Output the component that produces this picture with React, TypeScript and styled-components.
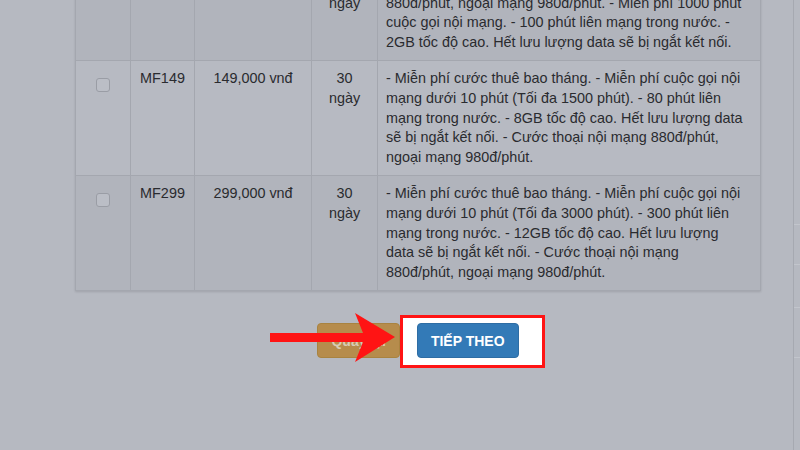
import styled, { createGlobalStyle } from 'styled-components';

const GlobalStyle = createGlobalStyle`
  html, body {
    margin: 0;
    padding: 0;
    background: #b6b9c1;
    font-family: "Liberation Sans", Arial, sans-serif;
    overflow: hidden;
  }
`;

type Plan = {
  code: string;
  price: string;
  days: string;
  desc: string;
};

const plans: Plan[] = [
  {
    code: 'MF99',
    price: '99,000 vnđ',
    days: '30 ngày',
    desc: '- Miễn phí cước thuê bao tháng. - Cước thoại nội mạng 880đ/phút, ngoại mạng 980đ/phút. - Miễn phí 1000 phút cuộc gọi nội mạng. - 100 phút liên mạng trong nước. - 2GB tốc độ cao. Hết lưu lượng data sẽ bị ngắt kết nối.',
  },
  {
    code: 'MF149',
    price: '149,000 vnđ',
    days: '30 ngày',
    desc: '- Miễn phí cước thuê bao tháng. - Miễn phí cuộc gọi nội mạng dưới 10 phút (Tối đa 1500 phút). - 80 phút liên mạng trong nước. - 8GB tốc độ cao. Hết lưu lượng data sẽ bị ngắt kết nối. - Cước thoại nội mạng 880đ/phút, ngoại mạng 980đ/phút.',
  },
  {
    code: 'MF299',
    price: '299,000 vnđ',
    days: '30 ngày',
    desc: '- Miễn phí cước thuê bao tháng. - Miễn phí cuộc gọi nội mạng dưới 10 phút (Tối đa 3000 phút). - 300 phút liên mạng trong nước. - 12GB tốc độ cao. Hết lưu lượng data sẽ bị ngắt kết nối. - Cước thoại nội mạng 880đ/phút, ngoại mạng 980đ/phút.',
  },
];

export default function App() {
  return (
    <Page>
      <GlobalStyle />
      <Main>
        <Table>
          <colgroup>
            <col style={{ width: 55 }} />
            <col style={{ width: 64 }} />
            <col style={{ width: 117 }} />
            <col style={{ width: 66 }} />
            <col />
          </colgroup>
          <tbody>
            {plans.map((p, i) => (
              <Row key={p.code} $striped={i % 2 === 0}>
                <Cell $align="center">
                  <Checkbox />
                </Cell>
                <Cell $align="center">{p.code}</Cell>
                <Cell $align="center">{p.price}</Cell>
                <Cell $align="center">{p.days}</Cell>
                <Cell $align="left">{p.desc}</Cell>
              </Row>
            ))}
          </tbody>
        </Table>

        <Actions>
          <Button $variant="back">Quay lại</Button>
          <Highlight>
            <Button $variant="next">TIẾP THEO</Button>
          </Highlight>
        </Actions>
      </Main>
      <SideStrip />

      <Arrow width="130" height="54" viewBox="0 0 130 54">
        <path d="M0 20 L93 20 L85 0 L125 24 L85 49 L93 29 L0 29 Z" fill="#ff1414" />
      </Arrow>
    </Page>
  );
}

const Page = styled.div`
  position: relative;
  display: flex;
  height: 450px;
  overflow: hidden;
`;

const Main = styled.div`
  flex: 1;
  padding-left: 75px;
`;

const SideStrip = styled.div`
  width: 6px;
  border-left: 1px solid #a6a9b1;
  background: linear-gradient(
    to bottom,
    transparent 224px, #c2c5cc 224px, #c2c5cc 225px,
    transparent 225px, transparent 264px, #c2c5cc 264px, #c2c5cc 265px,
    transparent 265px, transparent 307px, #c2c5cc 307px, #c2c5cc 308px,
    transparent 308px, transparent 357px, #c2c5cc 357px, #c2c5cc 358px,
    transparent 358px
  );
`;

const Table = styled.table`
  margin-top: -35px;
  width: 686px;
  border-collapse: collapse;
  table-layout: fixed;
  border: 1px solid #a4a7af;
  box-shadow: 0 1px 2px rgba(0, 0, 0, 0.12);
  font-size: 14.4px;
  line-height: 19.6px;
  color: #2a2b2f;
`;

const Row = styled.tr<{ $striped: boolean }>`
  background: ${(p) => (p.$striped ? '#b1b4bc' : '#b7bac2')};
`;

const Cell = styled.td<{ $align: 'left' | 'center' }>`
  padding: 8px ${(p) => (p.$align === 'left' ? '12px' : '8px')} 8px 8px;
  vertical-align: top;
  text-align: ${(p) => p.$align};
  border: 1px solid #a4a7af;
`;

const Checkbox = styled.span`
  display: inline-block;
  width: 12px;
  height: 12px;
  margin-top: 9px;
  border: 1px solid #9a9da5;
  border-radius: 3px;
  background: #bbbec6;
`;

const Actions = styled.div`
  width: 686px;
  margin-top: 32px;
  display: flex;
  justify-content: center;
  gap: 17px;
`;

const Button = styled.button<{ $variant: 'back' | 'next' }>`
  position: relative;
  height: 35px;
  padding: 0 13px;
  border-radius: 4px;
  white-space: nowrap;
  font-family: "Liberation Sans", Arial, sans-serif;
  font-size: 14px;
  font-weight: 700;
  cursor: pointer;
  border: 1px solid ${(p) => (p.$variant === 'next' ? '#2e6da4' : '#a98340')};
  background: ${(p) => (p.$variant === 'next' ? '#337ab7' : '#b68c4c')};
  color: ${(p) => (p.$variant === 'next' ? '#ffffff' : '#d8ccb6')};
`;

const Highlight = styled.div`
  position: relative;

  &::before {
    content: '';
    position: absolute;
    top: -8px;
    bottom: -10px;
    left: -17px;
    right: -26px;
    background: #ffffff;
    border: 3px solid #ff1414;
  }
`;

const Arrow = styled.svg`
  position: absolute;
  left: 270px;
  top: 313px;
`;
